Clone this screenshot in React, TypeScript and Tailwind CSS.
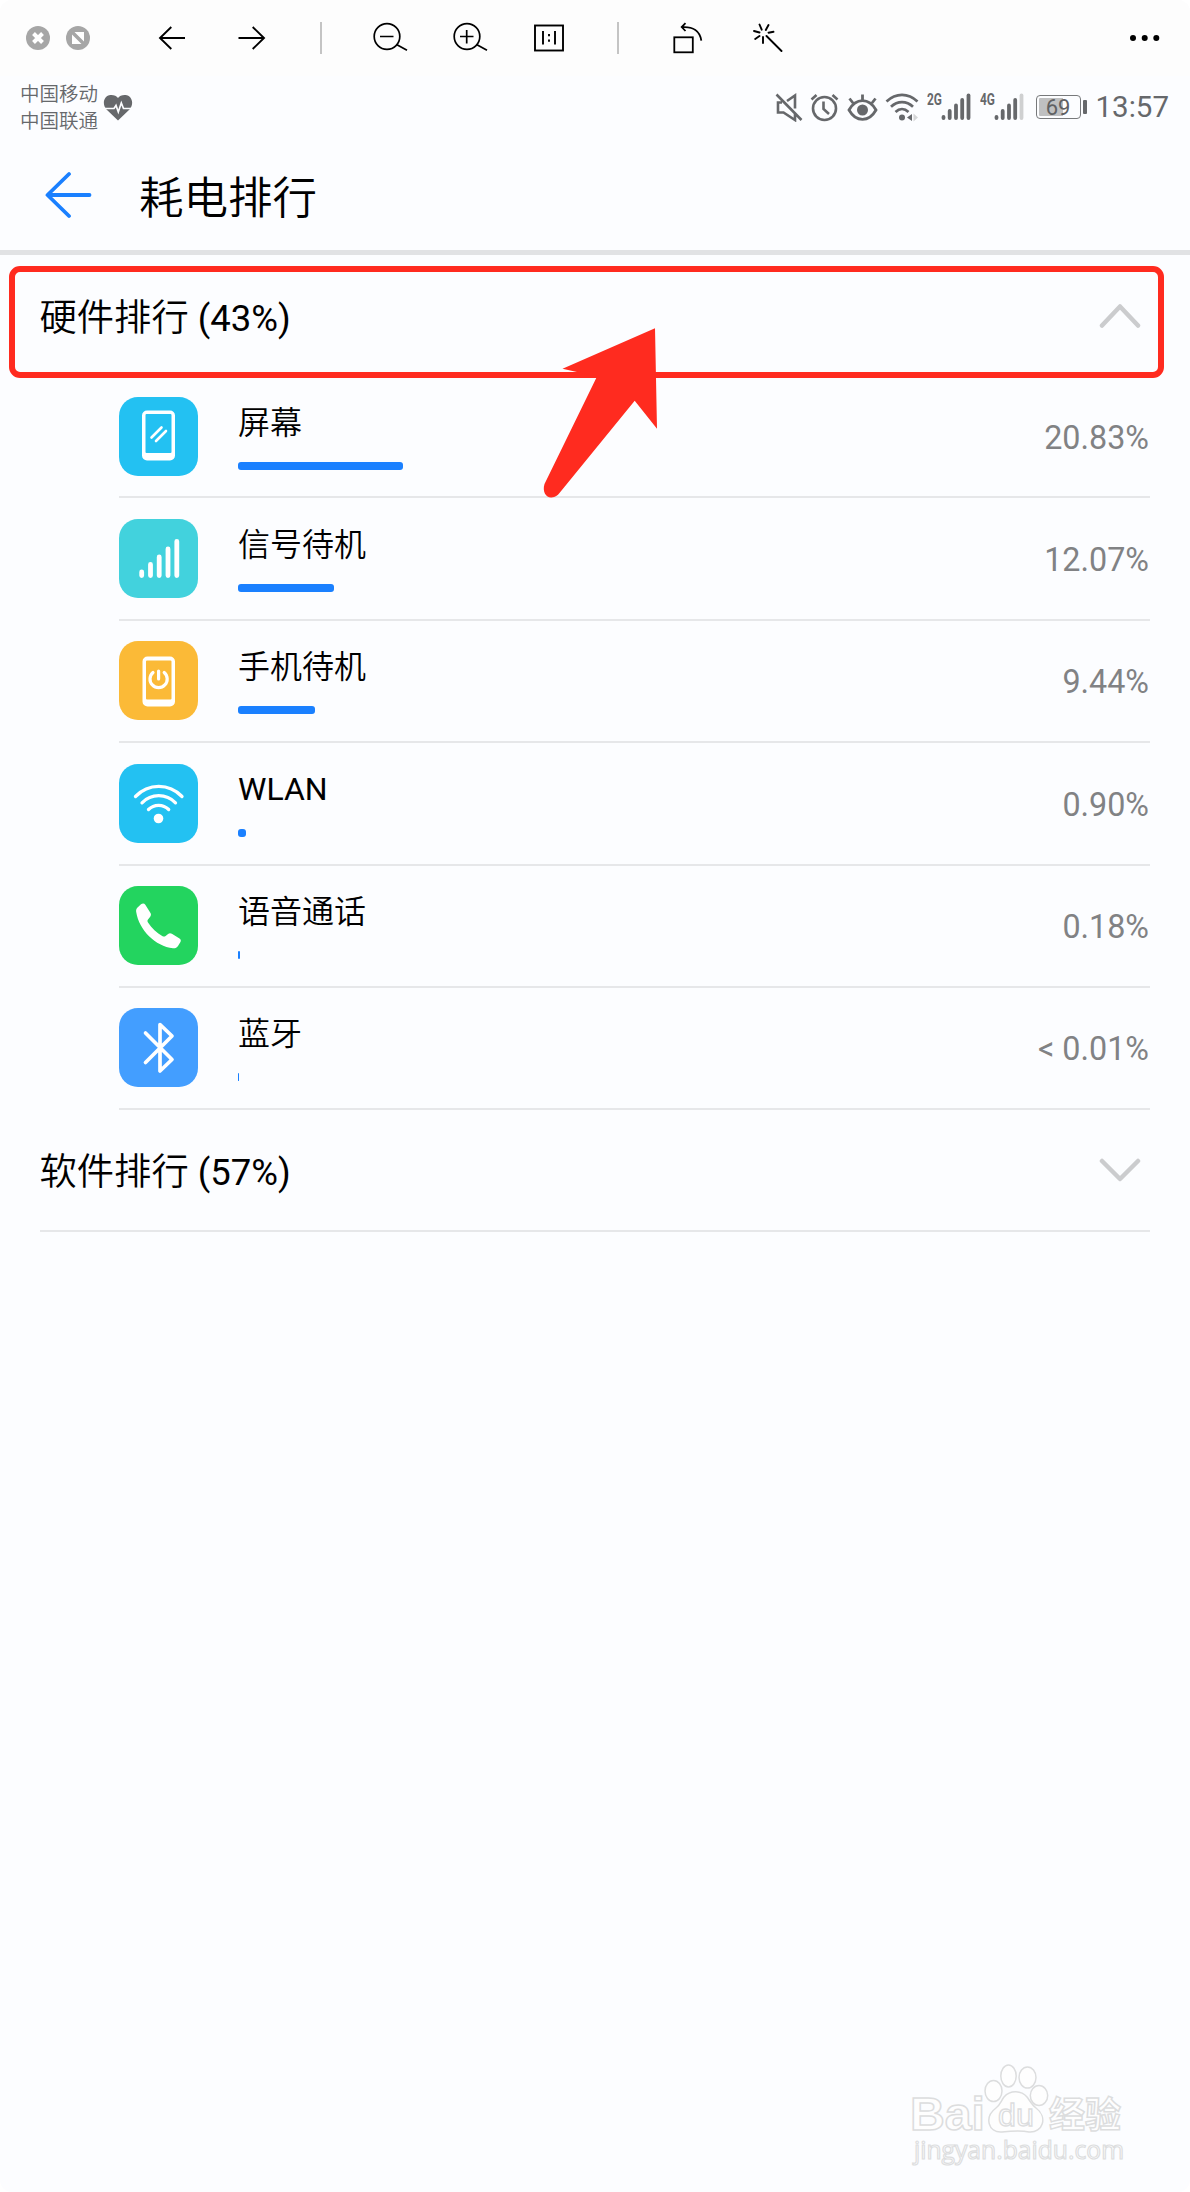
import { ReactNode, useState } from 'react'

interface UsageItem {
  name: string
  percent: string
  barWidth: number
  color: string
  icon: ReactNode
}

const hardware: UsageItem[] = [
  {
    name: '屏幕',
    percent: '20.83%',
    barWidth: 164.5,
    color: 'bg-[#23c1f2]',
    icon: (
      <>
        <path fillRule="evenodd" fill="#fff" d="M28 13.5h23a5 5 0 0 1 5 5v40a5 5 0 0 1-5 5H28a5 5 0 0 1-5-5v-40a5 5 0 0 1 5-5zM27.5 17a1 1 0 0 0-1 1v37a1 1 0 0 0 1 1h24a1 1 0 0 0 1-1V18a1 1 0 0 0-1-1z" />
        <path d="M32.5 40.5 42.5 30.5M37 44l10-10" stroke="#fff" strokeWidth="2.6" strokeLinecap="round" />
      </>
    ),
  },
  {
    name: '信号待机',
    percent: '12.07%',
    barWidth: 96,
    color: 'bg-[#42d2dd]',
    icon: <path d="M22.7 53v3.5M31.5 45.5v11M40.2 38v18.5M49 30v26.5M57.8 22.5v34" stroke="#fff" strokeWidth="4.8" strokeLinecap="round" />,
  },
  {
    name: '手机待机',
    percent: '9.44%',
    barWidth: 77,
    color: 'bg-[#fbba37]',
    icon: (
      <>
        <path fillRule="evenodd" fill="#fff" d="M28.5 15.5h22.5a5 5 0 0 1 5 5v40a5 5 0 0 1-5 5h-22.5a5 5 0 0 1-5-5v-40a5 5 0 0 1 5-5zM28 19.5a1 1 0 0 0-1 1v37a1 1 0 0 0 1 1h23.5a1 1 0 0 0 1-1v-37a1 1 0 0 0-1-1z" />
        <path d="M34 31.5a8.6 8.6 0 1 0 11.2 0M39.6 30v8" stroke="#fff" strokeWidth="3.2" strokeLinecap="round" />
      </>
    ),
  },
  {
    name: 'WLAN',
    percent: '0.90%',
    barWidth: 8,
    color: 'bg-[#23c1f2]',
    icon: (
      <>
        <path d="M16.5 32.5c13-13.5 33.5-13.5 46.5 0M23 38.8c9.3-9.5 24.2-9.5 33.5 0M29.5 45.5c5.6-5.6 14.6-5.6 20.2 0" stroke="#fff" strokeWidth="3.3" strokeLinecap="round" />
        <circle cx="39.5" cy="54.5" r="4.8" fill="#fff" />
      </>
    ),
  },
  {
    name: '语音通话',
    percent: '0.18%',
    barWidth: 2,
    color: 'bg-[#23d45f]',
    icon: (
      <path
        fill="#fff"
        d="M18.5 21.5l3.5-3.2c1.6-1.2 3.3-1 4.3.5l5.2 8.3c.8 1.5.5 2.8-.5 4l-2 2.4c-.8 1-.6 2 0 3 3.5 5.6 8.8 10.6 14.6 13.7 1 .6 2.1.5 3-.2l2.5-2c1.2-1 2.5-1 3.8-.2l7.6 4.7c1.5 1 1.7 2.4.8 3.8l-2.3 3.6c-1.2 1.8-2.8 2.5-5 2.3C36.5 60.5 20 44 17.2 26c-.3-1.9.1-3.3 1.3-4.5z"
      />
    ),
  },
  {
    name: '蓝牙',
    percent: '< 0.01%',
    barWidth: 1,
    color: 'bg-[#439eff]',
    icon: <path d="M26.5 25 53 51.5 41 63V16.5L53 28 26.5 54.5" stroke="#fff" strokeWidth="3.7" strokeLinecap="round" strokeLinejoin="round" />,
  },
]

function Toolbar() {
  return (
    <div className="flex h-[76px] items-center bg-[#fdfdfd] pl-[26px] pr-[30px]">
      <svg className="shrink-0" width="24" height="24" fill="none">
        <circle cx="12" cy="12" r="12" fill="#a6a6a6" />
        <path d="M7.5 7.5l9 9M16.5 7.5l-9 9" stroke="#fff" strokeWidth="4" />
      </svg>
      <svg className="ml-4 shrink-0" width="24" height="24">
        <circle cx="12" cy="12" r="12" fill="#a6a6a6" />
        <path d="M8.5 6H18v9.5zM6 8.5V18h9.5z" fill="#fff" />
      </svg>
      <svg className="ml-[67px] shrink-0" width="28" height="28" fill="none" stroke="#000" strokeWidth="1.9">
        <path d="M28 14H2.5M14.300 3 3 14l11.300 11" />
      </svg>
      <svg className="ml-[53px] shrink-0" width="28" height="28" fill="none" stroke="#000" strokeWidth="1.9">
        <path d="M.5 14H26.5M14.700 3 26 14 14.700 25" />
      </svg>
      <div className="ml-[54px] h-8 w-0.5 shrink-0 bg-[#c4c4c4]" />
      <svg className="ml-[50px] shrink-0" width="36" height="32" fill="none" stroke="#000" strokeWidth="1.7">
        <circle cx="15" cy="14.5" r="12.8" />
        <path d="M8 14.5h13.5M24.5 22.5 35 28.3" />
      </svg>
      <svg className="ml-11 shrink-0" width="36" height="32" fill="none" stroke="#000" strokeWidth="1.7">
        <circle cx="15" cy="14.5" r="12.8" />
        <path d="M8 14.5h13.5M14.7 8v13.5M24.5 22.5 35 28.3" />
      </svg>
      <svg className="ml-[46px] shrink-0" width="30" height="28" fill="none" stroke="#000" strokeWidth="1.9">
        <rect x="1" y="1.5" width="28" height="25" />
        <path d="M9 7v13.5M21 7v13.5" />
        <path d="M15 10v2.2M15 15.5v2.2" />
      </svg>
      <div className="ml-[53px] h-8 w-0.5 shrink-0 bg-[#c4c4c4]" />
      <svg className="ml-[54px] shrink-0" width="30" height="32" fill="none" stroke="#000" strokeWidth="1.8">
        <rect x="1.3" y="15.3" width="18.5" height="15" />
        <path d="M12.5 1.2 8.7 5l3.8 4M9 5.2c11-.8 18 4 19.3 13.5" />
      </svg>
      <svg className="ml-[50px] shrink-0" width="30" height="30" fill="none" stroke="#000" strokeWidth="1.9" strokeLinecap="round">
        <path d="M13.5 13 28.5 28M6.5 1.5l2.2 5.2M15.5 2l-2.7 5M20.5 8.8l-5 .9M1 8l5.5 1.5M6.500 13l-4.300 3M10 14v6" />
      </svg>
      <svg className="ml-auto shrink-0" width="32" height="8">
        <circle cx="5" cy="4" r="3" />
        <circle cx="16.7" cy="4" r="3" />
        <circle cx="28.3" cy="4" r="3" />
      </svg>
    </div>
  )
}

function Signal({ label, weak }: { label: string; weak?: boolean }) {
  return (
    <div className="flex items-start">
      <span className="w-[14px] origin-left scale-x-[0.7] font-['Roboto'] text-[17px] font-bold leading-[13px]">{label}</span>
      <svg width="30" height="28" fill="none" stroke="#66686b" strokeWidth="3.8" strokeLinecap="round">
        <path d="M2.5 24v1M8.7 18v7M15 12.5V25M21.2 7v18" />
        <path d="M27.5 2.5V25" stroke={weak ? '#cfd0d1' : '#66686b'} />
      </svg>
    </div>
  )
}

function StatusBar() {
  return (
    <div className="flex h-[62px] items-center pl-[20px] pr-[21px] text-[#66686b]">
      <div className="mt-[2px] text-[19.5px] font-[350] leading-[27px]">
        <div>中国移动</div>
        <div>中国联通</div>
      </div>
      <svg className="ml-[5px]" width="30" height="27" fill="none">
        <path d="M15 26.5 3.5 15.5C-1.5 10 1 1.5 7.5 1 11 .8 13.5 2 15 4c1.5-2 4-3.2 7.5-3C29 1.5 31.5 10 26.5 15.5z" fill="#66686b" />
        <path d="M1.5 14.5h9.5l2-3 2.3 6.5 3-9 2.2 5.5h8" stroke="#fcfdff" strokeWidth="1.7" />
      </svg>
      <svg className="ml-auto" width="28" height="29" fill="none" stroke="#66686b" strokeWidth="2.6">
        <path d="M1.5 1.5 26.5 27M7 9.5H3v10h5.5L20 27V21M12 8l8-5.5v13" />
      </svg>
      <svg className="ml-[7px]" width="29" height="29" fill="none" stroke="#66686b" strokeWidth="2.6">
        <circle cx="14.5" cy="15.5" r="11.5" />
        <path d="M13.5 8.5v7.5l5.5 5M1.5 6.5l5-4.5M27.5 6.5l-5-4.5" />
      </svg>
      <svg className="ml-[8px]" width="31" height="29" fill="none" stroke="#66686b" strokeWidth="2.8">
        <path d="M2 17c7-12.5 20-12.5 27 0-7 12.5-20 12.5-27 0zM15.5 1.5V8M2.5 5.5 6 10M28.5 5.5 25 10" />
        <circle cx="15.5" cy="17" r="5.5" fill="#66686b" stroke="none" />
      </svg>
      <svg className="ml-[7px]" width="34" height="29" fill="none" stroke="#66686b" strokeWidth="2.7">
        <path d="M1.5 8.5c9.5-8.8 21.5-8.8 31 0M6 13.8c6.5-6.2 15.5-6.2 22 0M10.5 19c4-3.8 9-3.8 13 0" />
        <circle cx="17" cy="24.5" r="3" fill="#66686b" stroke="none" />
        <path d="M22 24.5l5-3.5v7z" fill="#66686b" stroke="none" />
        <path d="M28.5 20.5v8l4.5-4z" fill="#d5d6d7" stroke="none" />
      </svg>
      <div className="ml-[8px] flex gap-[9px]">
        <Signal label="2G" />
        <Signal label="4G" weak />
      </div>
      <div className="ml-[12px] flex items-center gap-[2px]">
        <div className="flex h-[24px] w-[45px] rounded-[4px] border-[1.5px] border-[#77797b] bg-[linear-gradient(90deg,#bfc0c1_60%,transparent_60%)] bg-clip-content p-[2px]">
          <span className="flex-1 text-center text-[22px] leading-[19px] text-[#5f6163]">69</span>
        </div>
        <div className="h-[14px] w-[4px] rounded-[1px] bg-[#66686b]" />
      </div>
      <span className="ml-[9px] text-[29.5px] leading-[30px]">13:57</span>
    </div>
  )
}

function Chevron({ open }: { open: boolean }) {
  return (
    <svg width="42" height="26" fill="none" stroke="#cbccce" strokeWidth="4.5" strokeLinecap="round" strokeLinejoin="round">
      <path d={open ? 'M3 22.500 21 3.500l18 19' : 'M3 4l18 18L39 4'} />
    </svg>
  )
}

function UsageRow({ item }: { item: UsageItem }) {
  return (
    <div className="ml-[119px] mr-[40px] flex h-[122.35px] items-start border-b-2 border-[#e6e7e9] pt-[20.5px]">
      <div className={`h-[79px] w-[79px] shrink-0 rounded-[19px] ${item.color}`}>
        <svg width="79" height="79" fill="none">{item.icon}</svg>
      </div>
      <div className="ml-10 flex-1">
        <div className={`mt-[6px] h-[40px] text-[32px] ${item.name === 'WLAN' ? 'leading-[38px]' : 'font-[350] leading-[40px]'}`}>{item.name}</div>
        <div className="mt-[19px] h-2 rounded-[3px] bg-[#1a80ff]" style={{ width: item.barWidth }} />
      </div>
      <span className="mr-px mt-[21px] text-[32.3px] leading-[40px] text-[#818284]">{item.percent}</span>
    </div>
  )
}

function Watermark() {
  return (
    <svg className="absolute left-[904px] top-[2056px]" width="240" height="130" fill="#fefefe" stroke="#dcddde" strokeWidth="1.5">
      <text x="6" y="74" fontSize="46" fontFamily="Liberation Sans" fontWeight="bold" textLength="75" lengthAdjust="spacingAndGlyphs">Bai</text>
      <ellipse cx="89.5" cy="35" rx="8.5" ry="10.5" />
      <ellipse cx="104.5" cy="20" rx="7.7" ry="11" />
      <ellipse cx="123.5" cy="21.5" rx="8.5" ry="10.5" />
      <ellipse cx="135" cy="39.5" rx="8.7" ry="10" />
      <path d="M100 41c6-7 17-7 23 0 3 4 5 8 9 11 12 9 7 25-7 24-9-2-18-1-27 0-14 1-18-15-6-24 4-3 5-7 8-11z" />
      <text x="94" y="70" fontSize="31" fontFamily="Liberation Sans" strokeWidth="1.3" textLength="36" lengthAdjust="spacingAndGlyphs">du</text>
      <text x="145" y="72" fontSize="36" fontFamily="Noto Sans CJK SC" fontWeight="bold" textLength="72" lengthAdjust="spacingAndGlyphs">经验</text>
      <text x="10" y="103" fontSize="25" fontFamily="Open Sans" strokeWidth="1.2" textLength="210" lengthAdjust="spacingAndGlyphs">jingyan.baidu.com</text>
    </svg>
  )
}

function SectionTitle({ title, total }: { title: string; total: string }) {
  return (
    <span className="mt-[5px] text-[37.3px] font-[350] leading-[48px]">
      {title} <span className="text-[36.5px] font-normal">({total})</span>
    </span>
  )
}

export default function App() {
  const [hardwareOpen, setHardwareOpen] = useState(true)

  return (
    <div className="bg-white">
      <div className="relative h-[2192px] w-[1190px] overflow-hidden rounded-[12px] bg-[#fcfdff] font-['Roboto','Noto_Sans_CJK_SC',sans-serif] text-black">
        <Toolbar />
        <StatusBar />

        <div className="flex h-[117px] items-center border-b-[5px] border-[#e1e2e4] pl-[45px]">
          <svg className="mt-[2px]" width="48" height="48" fill="none" stroke="#1a80ff" strokeWidth="3.8" strokeLinecap="round" strokeLinejoin="round">
            <path d="M44.5 24H3M24 3 2.5 24 24 45" />
          </svg>
          <h1 className="ml-[46px] mt-[9px] text-[44.5px] font-[350] leading-[56px]">耗电排行</h1>
        </div>

        <button
          onClick={() => setHardwareOpen(!hardwareOpen)}
          className="flex h-[121.15px] w-full items-center justify-between pl-[39.5px] pr-[49px]"
        >
          <SectionTitle title="硬件排行" total="43%" />
          <Chevron open={hardwareOpen} />
        </button>

        {hardwareOpen && hardware.map((item) => <UsageRow key={item.name} item={item} />)}

        <div className="ml-[39.5px] mr-[40px] flex h-[121.3px] items-center justify-between border-b-2 border-[#e6e7e9] pr-[9px]">
          <SectionTitle title="软件排行" total="57%" />
          <Chevron open={false} />
        </div>

        {/* highlight frame and pointer over the first section */}
        <div className="pointer-events-none absolute left-[9px] top-[266px] h-[112px] w-[1155px] rounded-[11px] border-[6px] border-[#ff2b1f]" />
        <svg className="pointer-events-none absolute left-[540px] top-[320px]" width="124" height="184" fill="#ff2b1f">
          <path d="M115 8.3 22.5 48.7 57 56.5 4.5 164c-2.5 8 2 14 7 13.5 4-.3 6-2 8-4.500L94.700 80.700 117 108.700z" />
        </svg>

        <Watermark />
      </div>
    </div>
  )
}
